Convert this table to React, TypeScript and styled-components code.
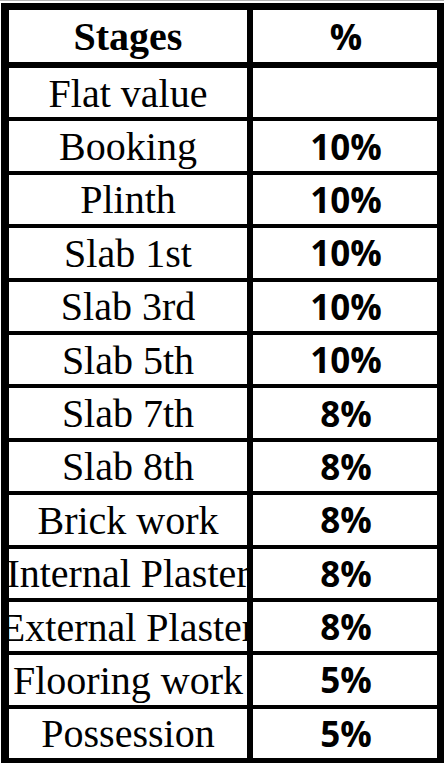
import React from "react";
import styled, { createGlobalStyle } from "styled-components";

const GlobalStyle = createGlobalStyle`
  html, body {
    margin: 0;
    padding: 0;
    background: #ffffff;
  }
`;

const Page = styled.div`
  width: 444px;
  height: 768px;
  border-top: 1px solid #b5b5b5;
  box-sizing: border-box;
  padding-top: 2px;
  padding-left: 1px;
  overflow: hidden;
`;

const Table = styled.div`
  display: flex;
  flex-direction: column;
  width: 443px;
  box-sizing: border-box;
  background: #000;
  border-style: solid;
  border-color: #000;
  border-width: 7px 7px 5px 8px;
`;

const Row = styled.div<{ $head?: boolean }>`
  display: grid;
  grid-template-columns: 238px 184px;
  column-gap: 6px;
  height: ${(p) => (p.$head ? "52px" : "49.4px")};
  margin-bottom: ${(p) => (p.$head ? "6px" : "4px")};

  &:last-child {
    margin-bottom: 0;
  }
`;

const Cell = styled.div`
  display: flex;
  align-items: center;
  justify-content: center;
  background: #fff;
  overflow: hidden;
  white-space: nowrap;
  color: #000;

  span {
    flex-shrink: 0;
  }
`;

const StageCell = styled(Cell)<{ $bold?: boolean }>`
  font-family: "Liberation Serif", "Times New Roman", serif;
  font-size: 40px;
  font-weight: ${(p) => (p.$bold ? 700 : 400)};
  padding-top: 1px;
`;

const PercentCell = styled(Cell)<{ $head?: boolean }>`
  font-family: "Open Sans", "Liberation Sans", sans-serif;
  font-size: ${(p) => (p.$head ? "36px" : "35px")};
  font-weight: 700;
  padding-left: 2px;
`;

const stages: Array<{ name: string; pct: string }> = [
  { name: "Flat value", pct: "" },
  { name: "Booking", pct: "10%" },
  { name: "Plinth", pct: "10%" },
  { name: "Slab 1st", pct: "10%" },
  { name: "Slab 3rd", pct: "10%" },
  { name: "Slab 5th", pct: "10%" },
  { name: "Slab 7th", pct: "8%" },
  { name: "Slab 8th", pct: "8%" },
  { name: "Brick work", pct: "8%" },
  { name: "Internal Plaster", pct: "8%" },
  { name: "External Plaster", pct: "8%" },
  { name: "Flooring work", pct: "5%" },
  { name: "Possession", pct: "5%" },
];

const App = () => {
  return (
    <>
      <GlobalStyle />
      <Page>
        <Table>
          <Row $head>
            <StageCell $bold>
              <span>Stages</span>
            </StageCell>
            <PercentCell $head>
              <span>%</span>
            </PercentCell>
          </Row>
          {stages.map((s, i) => (
            <Row key={i}>
              <StageCell>
                <span>{s.name}</span>
              </StageCell>
              <PercentCell>
                <span>{s.pct}</span>
              </PercentCell>
            </Row>
          ))}
        </Table>
      </Page>
    </>
  );
};

export default App;
